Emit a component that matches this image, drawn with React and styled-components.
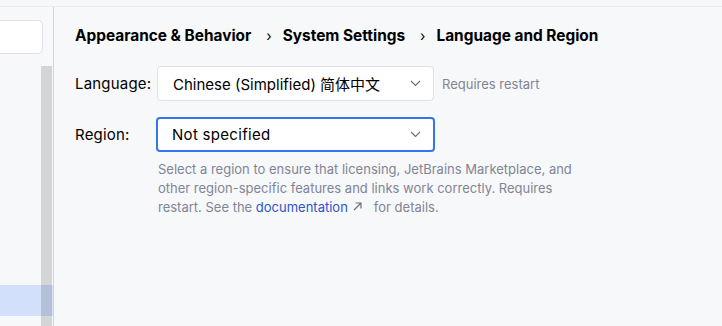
import React from 'react';
import styled, { createGlobalStyle } from 'styled-components';

const GlobalStyle = createGlobalStyle`
    html, body {
        margin: 0;
        padding: 0;
        background: #f7f8fa;
    }
    body {
        font-family: Inter, "Noto Sans", "Noto Sans CJK SC", sans-serif;
        color: #000;
    }
`;

const Chevron = () => (
    <svg width="11" height="7" viewBox="0 0 11 7" fill="none">
        <path d="M1 1l4.5 4.5L10 1" stroke="#6c707e" strokeWidth="1.2" />
    </svg>
);

const ExternalArrow = () => (
    <svg width="11" height="11" viewBox="0 0 11 11" fill="none">
        <path d="M2 9L9 2M3.5 2H9v5.5" stroke="#6c707e" strokeWidth="1.2" />
    </svg>
);

const App = () => {
    return (
        <>
            <GlobalStyle />
            <Page>
                <TopBar />
                <Body>
                    <Sidebar>
                        <SearchField />
                        <TreeArea>
                            <TreeList>
                                <SelectedRow />
                            </TreeList>
                            <Scrollbar />
                        </TreeArea>
                    </Sidebar>
                    <Content>
                        <Breadcrumbs>
                            <Crumb>Appearance &amp; Behavior</Crumb>
                            <Separator>›</Separator>
                            <Crumb>System Settings</Crumb>
                            <Separator>›</Separator>
                            <Crumb>Language and Region</Crumb>
                        </Breadcrumbs>
                        <Row>
                            <Label>Language:</Label>
                            <Select>
                                <span>Chinese (Simplified) 简体中文</span>
                                <Chevron />
                            </Select>
                            <Hint>Requires restart</Hint>
                        </Row>
                        <Row $top={16}>
                            <Label>Region:</Label>
                            <Select $focused>
                                <span>Not specified</span>
                                <Chevron />
                            </Select>
                        </Row>
                        <Description>
                            Select a region to ensure that licensing, JetBrains Marketplace, and
                            <br />
                            other region-specific features and links work correctly. Requires
                            <br />
                            restart. See the <Link>documentation</Link>
                            <ExternalArrow />
                            <Tail>for details.</Tail>
                        </Description>
                    </Content>
                </Body>
            </Page>
        </>
    );
};

export default App;

const Page = styled.div`
    width: 722px;
    height: 326px;
    display: flex;
    flex-direction: column;
    overflow: hidden;
    background: #f7f8fa;
`;

const TopBar = styled.div`
    height: 6px;
    flex-shrink: 0;
    border-bottom: 1px solid #ebecf0;
`;

const Body = styled.div`
    flex: 1;
    display: flex;
    min-height: 0;
`;

const Sidebar = styled.div`
    width: 53px;
    flex-shrink: 0;
    display: flex;
    flex-direction: column;
    border-right: 1px solid #d3d5db;
    padding-top: 13px;
`;

const SearchField = styled.div`
    height: 32px;
    margin-left: -10px;
    margin-right: 10px;
    background: #fff;
    border: 1px solid #dfe1e5;
    border-radius: 5px;
`;

const TreeArea = styled.div`
    flex: 1;
    margin-top: 12px;
    position: relative;
    display: flex;
`;

const TreeList = styled.div`
    flex: 1;
    padding-top: 219px;
`;

const SelectedRow = styled.div`
    height: 31px;
    width: 53px;
    background: rgba(194, 214, 252, 0.7);
`;

const Scrollbar = styled.div`
    position: absolute;
    top: 0;
    bottom: 0;
    right: 1px;
    width: 11px;
    background: rgba(0, 0, 0, 0.14);
`;

const Content = styled.div`
    flex: 1;
    padding: 16px 0 0 21px;
`;

const Breadcrumbs = styled.div`
    display: flex;
    align-items: center;
    height: 25px;
    font-size: 15.4px;
    font-weight: 700;
    color: #000;
`;

const Crumb = styled.span``;

const Separator = styled.span`
    font-weight: 400;
    font-size: 14px;
    margin: 0 11px 0 15px;
`;

const Row = styled.div`
    display: flex;
    align-items: center;
    margin-top: ${({ $top }) => $top ?? 18}px;
`;

const Label = styled.div`
    width: 82px;
    font-size: 15px;
    letter-spacing: 0.2px;
    color: #000;
`;

const Select = styled.div`
    box-sizing: border-box;
    width: ${({ $focused }) => ($focused ? '279px' : '277px')};
    height: 35px;
    display: flex;
    align-items: center;
    justify-content: space-between;
    padding: 0 12px 0 ${({ $focused }) => ($focused ? '14px' : '15px')};
    margin-left: ${({ $focused }) => ($focused ? '-1px' : '0')};
    background: #fff;
    border: ${({ $focused }) => ($focused ? '2px solid #3574f0' : '1px solid #dfe1e5')};
    border-radius: 4px;
    font-size: 15px;
    letter-spacing: ${({ $focused }) => ($focused ? '0.3px' : '0')};
    color: #000;
`;

const Hint = styled.div`
    margin-left: 8px;
    font-size: 13px;
    color: #818594;
`;

const Description = styled.div`
    margin: 8px 0 0 83px;
    font-size: 13px;
    line-height: 19px;
    color: #818594;

    svg {
        vertical-align: 0;
        margin-left: 4px;
    }
`;

const Link = styled.span`
    color: #2e55c9;
`;

const Tail = styled.span`
    margin-left: 11px;
`;
